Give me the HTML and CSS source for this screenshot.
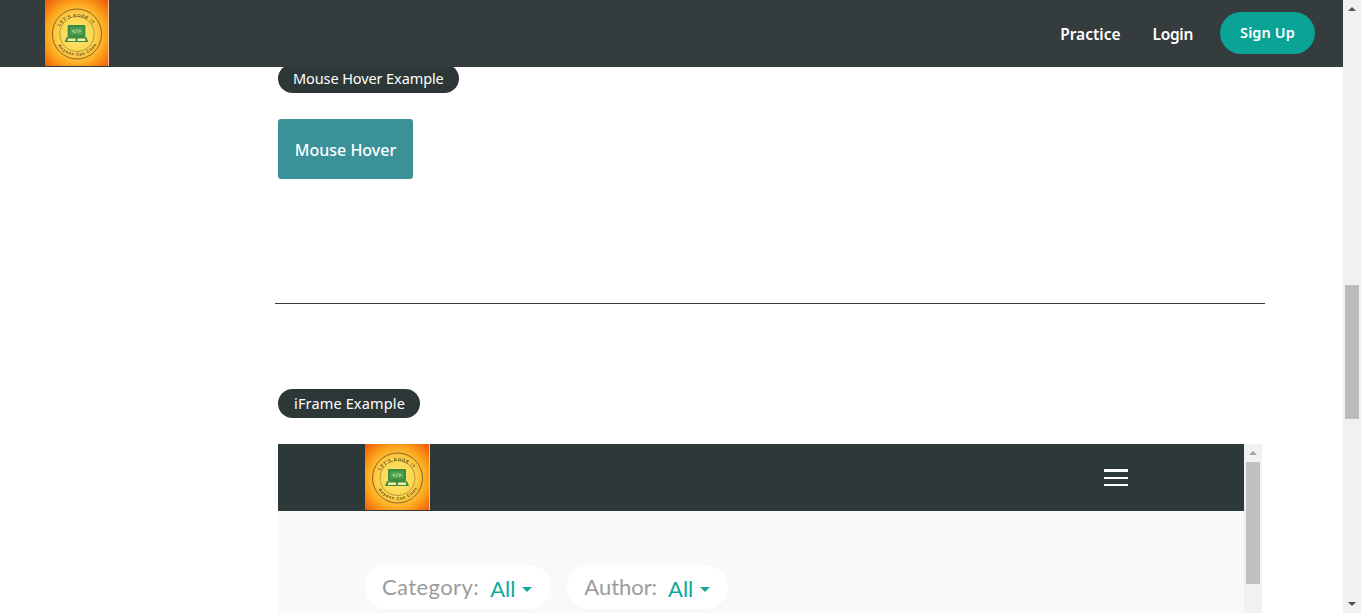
FILE: index.html
```html
<!DOCTYPE html>
<html lang="en">
<head>
<meta charset="utf-8">
<title>Practice</title>
<link rel="stylesheet" href="styles.css">
</head>
<body>
<div class="window">
  <div class="viewport">
    <header class="topbar">
      <a class="brand" href="#">
        <svg class="logo-mark" viewBox="0 0 65 66" preserveAspectRatio="none">
          <defs>
            <radialGradient id="sun" cx="50%" cy="52%" r="70%">
              <stop offset="0" stop-color="#fbe878"/>
              <stop offset="0.4" stop-color="#fdd64e"/>
              <stop offset="0.68" stop-color="#fca51c"/>
              <stop offset="1" stop-color="#f05a08"/>
            </radialGradient>
            <path id="ring-top" d="M13 31a20.500 20.500 0 0 1 39 0"/>
            <path id="ring-bottom" d="M11 41a23 23 0 0 0 43 0"/>
          </defs>
          <g id="logo-art">
            <rect width="64" height="66" fill="url(#sun)"/>
            <rect x="64" width="1" height="66" fill="#f7c49a"/>
            <g class="logo-detail">
              <circle cx="32.500" cy="34" r="25" fill="none" stroke="#7d5c24" stroke-width="0.900"/>
              <circle cx="32.500" cy="34" r="17.500" fill="none" stroke="#98782e" stroke-width="0.700"/>
              <text class="logo-ring"><textPath href="#ring-top" startOffset="5">LET'S KODE IT</textPath></text>
              <text class="logo-ring"><textPath href="#ring-bottom" startOffset="5">Anyone Can Code</textPath></text>
              <rect x="23" y="25" width="18" height="12" rx="1" fill="#3b8d42"/>
              <rect x="25.500" y="27.500" width="13" height="7" fill="#52a253"/>
              <text class="logo-code" x="32" y="33">&lt;/&gt;</text>
              <path d="M22 37h20l2 5H20z" fill="#3b8d42"/>
              <rect x="23" y="38.500" width="8" height="2.500" fill="#f4ee9c"/>
              <rect x="33" y="38.500" width="8" height="2.500" fill="#f4ee9c"/>
            </g>
          </g>
        </svg>
      </a>
      <nav class="topnav">
        <a class="topnav-link" href="#">Practice</a>
        <a class="topnav-link topnav-link-last" href="#">Login</a>
        <a class="signup" href="#">Sign Up</a>
      </nav>
    </header>

    <main class="content">
      <section class="block block-hover">
        <h2 class="pill pill-hover">Mouse Hover Example</h2>
        <button class="hover-btn" type="button">Mouse Hover</button>
      </section>
      <hr class="rule">
      <section class="block block-frame">
        <h2 class="pill pill-frame">iFrame Example</h2>
        <div class="frame">
          <div class="frame-page">
            <div class="frame-bar">
              <svg class="frame-logo" viewBox="0 0 65 66"><use href="#logo-art"/></svg>
              <span class="burger"><i></i><i></i><i></i></span>
            </div>
            <div class="filters">
              <div class="filter filter-category"><span class="filter-label">Category:</span><span class="filter-value">All</span><span class="caret"></span></div>
              <div class="filter filter-author"><span class="filter-label">Author:</span><span class="filter-value">All</span><span class="caret"></span></div>
            </div>
          </div>
          <div class="frame-scroll">
            <span class="arrow-up arrow-light"></span>
            <span class="frame-thumb"></span>
          </div>
        </div>
      </section>
    </main>
  </div>
  <div class="page-scroll">
    <span class="arrow-up"></span>
    <span class="page-thumb"></span>
    <span class="arrow-down"></span>
  </div>
</div>
</body>
</html>
```

FILE: styles.css
```css
* { box-sizing: border-box; }

html, body {
  margin: 0;
  height: 613px;
  overflow: hidden;
  background: #fff;
  font-family: "Noto Sans", "Open Sans", sans-serif;
}

.window { display: flex; height: 613px; }
.viewport { flex: 1; min-width: 0; overflow: hidden; }

/* top bar */
.topbar {
  position: relative;
  z-index: 2;
  height: 67px;
  background: #343c3e;
  display: flex;
  align-items: flex-start;
  justify-content: space-between;
  padding: 0 28px 0 45px;
}
.brand { display: block; height: 66px; }
.logo-mark { display: block; width: 64px; height: 66px; }
.logo-detail { filter: blur(0.300px); }
.logo-ring { font: 700 4.400px "Liberation Sans", sans-serif; letter-spacing: 0.600px; fill: #5f4a1e; }
.logo-code { font: 700 5px "Liberation Mono", monospace; fill: #d9efb0; text-anchor: middle; }

.topnav { display: flex; align-items: center; height: 66px; }
.topnav-link {
  color: #fff;
  text-decoration: none;
  font-size: 15.500px;
  font-weight: 600;
  margin-right: 32px;
  margin-top: 1px;
}
.topnav-link-last { margin-right: 27px; letter-spacing: -0.300px; }
.signup {
  width: 95px;
  height: 42px;
  border-radius: 21px;
  background: #0aa395;
  color: #fff;
  text-decoration: none;
  font-size: 14.500px;
  font-weight: 600;
  letter-spacing: 0.100px;
  display: flex;
  align-items: center;
  justify-content: center;
  padding-bottom: 3px;
}

/* content */
.content { width: 990px; margin-left: 275px; margin-top: -3px; }
.block { padding-left: 3px; }
.block-hover { height: 239px; }
.block-frame { padding-top: 85px; }

.pill {
  display: table;
  margin: 0;
  height: 29px;
  padding: 0 15px;
  border-radius: 15px;
  background: #2d3738;
  color: #fff;
  font-size: 14.500px;
  font-weight: 400;
  line-height: 29px;
}
.pill-hover { letter-spacing: -0.100px; }
.pill-frame { letter-spacing: 0.150px; padding: 0 15px 0 16px; }

.hover-btn {
  display: block;
  margin-top: 26px;
  width: 135px;
  height: 60px;
  border: 0;
  border-radius: 3px;
  background: #3a9298;
  color: #fff;
  font-family: inherit;
  font-size: 16px;
  font-weight: 500;
  padding: 2px 0 0;
}

.rule { margin: 0; border: 0; border-top: 1px solid #343c3e; }

/* embedded frame */
.frame {
  margin-top: 26px;
  width: 984px;
  height: 300px;
  display: flex;
  background: #f9f9f9;
}
.frame-page { flex: 1; min-width: 0; }
.frame-bar {
  height: 67px;
  background: #2d3838;
  display: flex;
  align-items: flex-start;
  justify-content: space-between;
  padding: 0 116px 0 87px;
}
.frame-logo { display: block; width: 65px; height: 66px; }
.burger {
  display: flex;
  flex-direction: column;
  gap: 5px;
  width: 24px;
  margin-top: 25px;
}
.burger i { display: block; height: 2px; background: #fff; }
.burger i:first-child { height: 3px; }

.filters { display: flex; gap: 16px; padding: 54px 0 0 87px; }
.filter {
  height: 44px;
  padding: 0 18px 0 17px;
  border-radius: 22px;
  background: #fff;
  display: flex;
  align-items: center;
  font-family: "Lato", sans-serif;
  font-size: 22px;
}
.filter-category { letter-spacing: 0.400px; padding-right: 19px; }
.filter-author { letter-spacing: -0.050px; }
.filter-label { color: #9b9b9b; margin-right: 11px; margin-top: -1px; }
.filter-value { color: #0fa89a; font-size: 22px; letter-spacing: 0; margin-top: 2px; }
.caret {
  width: 0;
  height: 0;
  margin: 4px 0 0 7px;
  border-left: 5.500px solid transparent;
  border-right: 5.500px solid transparent;
  border-top: 5px solid #0fa89a;
}

/* scrollbars */
.frame-scroll {
  flex: none;
  width: 18px;
  background: #f1f1f1;
  display: flex;
  flex-direction: column;
  align-items: center;
  padding-top: 7px;
}
.frame-thumb { display: block; width: 14px; height: 122px; margin-top: 7px; background: #c1c1c1; }

.page-scroll {
  flex: none;
  width: 18px;
  background: #f1f1f1;
  position: relative;
}
.page-scroll .arrow-up { position: absolute; left: 5px; top: 7px; }
.page-scroll .arrow-down { position: absolute; left: 5px; bottom: 7px; }
.page-thumb { position: absolute; left: 2px; top: 285px; width: 14px; height: 134px; background: #bdbdbd; }

.arrow-up, .arrow-down {
  display: block;
  width: 0;
  height: 0;
  border-left: 4px solid transparent;
  border-right: 4px solid transparent;
}
.arrow-up { border-bottom: 4px solid #505050; }
.arrow-down { border-top: 4px solid #505050; }
.arrow-light { border-bottom-color: #a3a3a3; }
```
